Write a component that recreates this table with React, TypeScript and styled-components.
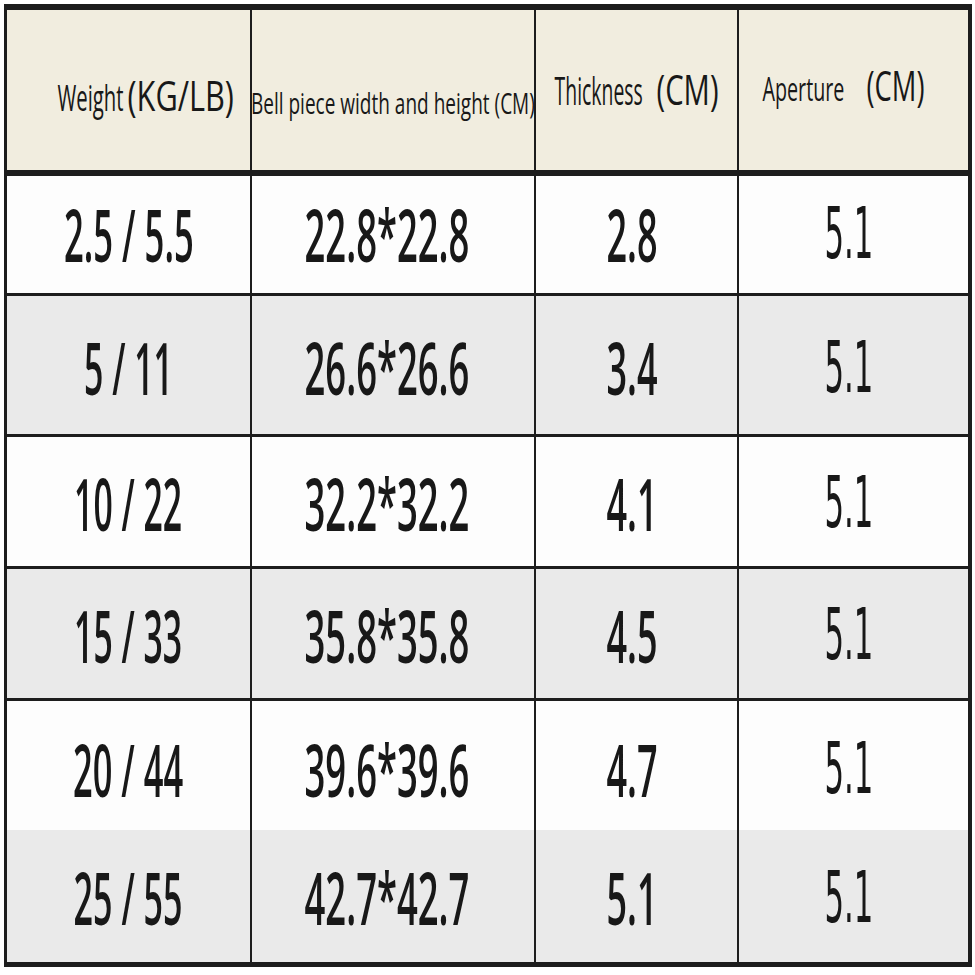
import React, { useLayoutEffect, useRef, useState } from "react";
import styled, { createGlobalStyle } from "styled-components";

const Global = createGlobalStyle`
  html, body { margin: 0; padding: 0; background: #ffffff; }
  body { font-family: "Open Sans", "Liberation Sans", sans-serif; color: #1b1b1b; }
`;

const LINE = "#1d1d1d";
const HEADER_BG = "#f1eddf";
const WHITE = "#fdfdfd";
const GREY = "#eaeaea";

const Page = styled.div`
  padding: 4px 0 0 4px;
`;

const Table = styled.div`
  box-sizing: border-box;
  width: 968px;
  height: 963px;
  border-style: solid;
  border-color: ${LINE};
  border-width: 6px 4px 5px 3px;
  display: grid;
  grid-template-columns: 245px 284px 203px 229px;
  grid-template-rows: 166px 120px 141px 132px 132px 129px 132px;
`;

const Cell = styled.div<{
  $bg: string;
  $bottom: number;
  $last?: boolean;
  $pl?: number;
  $pr?: number;
  $pt?: number;
  $pb?: number;
}>`
  box-sizing: border-box;
  min-width: 0;
  background: ${(p) => p.$bg};
  border-right: ${(p) => (p.$last ? 0 : 2)}px solid ${LINE};
  border-bottom: ${(p) => p.$bottom}px solid ${LINE};
  display: flex;
  align-items: center;
  justify-content: center;
  padding: ${(p) => p.$pt ?? 0}px ${(p) => p.$pr ?? 0}px ${(p) => p.$pb ?? 0}px
    ${(p) => p.$pl ?? 0}px;
`;

const HeaderGroup = styled.div<{ $gap: number }>`
  display: flex;
  align-items: baseline;
  gap: ${(p) => p.$gap}px;
`;

const FitOuter = styled.span<{ $w: number }>`
  display: inline-flex;
  justify-content: center;
  width: ${(p) => p.$w}px;
  flex: 0 0 auto;
`;

const FitInner = styled.span<{ $size: number; $dejavu: boolean; $weight: number }>`
  display: inline-block;
  flex-shrink: 0;
  white-space: pre;
  transform-origin: 50% 50%;
  font-family: ${(p) =>
    p.$dejavu
      ? `"DejaVu Sans Condensed", "DejaVu Sans", sans-serif`
      : `"Open Sans", "Noto Sans", "Liberation Sans", sans-serif`};
  font-size: ${(p) => p.$size}px;
  font-weight: ${(p) => p.$weight};
  line-height: 1.1;
  color: #181818;
`;

type FitProps = {
  w: number;
  size: number;
  dejavu?: boolean;
  weight?: number;
  children: React.ReactNode;
};

function Fit({ w, size, dejavu = false, weight = 400, children }: FitProps) {
  const ref = useRef<HTMLSpanElement>(null);
  const [scale, setScale] = useState(0.5);
  useLayoutEffect(() => {
    const el = ref.current;
    if (!el) return;
    const natural = el.offsetWidth;
    if (natural > 0) setScale(w / natural);
  }, [w, size, children]);
  return (
    <FitOuter $w={w}>
      <FitInner
        ref={ref}
        $size={size}
        $dejavu={dejavu}
        $weight={weight}
        style={{ transform: `scaleX(${scale})` }}
      >
        {children}
      </FitInner>
    </FitOuter>
  );
}

type Row = {
  weight: [string, number];
  size: string;
  thick: string;
  bg: string;
  bottom: number;
  pt: number;
};

const rows: Row[] = [
  { weight: ["2.5 / 5.5", 130], size: "22.8*22.8", thick: "2.8", bg: WHITE, bottom: 3, pt: 0 },
  { weight: ["5 / 11", 89], size: "26.6*26.6", thick: "3.4", bg: GREY, bottom: 3, pt: 6 },
  { weight: ["10 / 22", 108], size: "32.2*32.2", thick: "4.1", bg: WHITE, bottom: 3, pt: 4 },
  { weight: ["15 / 33", 108], size: "35.8*35.8", thick: "4.5", bg: GREY, bottom: 3, pt: 4 },
  { weight: ["20 / 44", 110], size: "39.6*39.6", thick: "4.7", bg: WHITE, bottom: 0, pt: 8 },
  { weight: ["25 / 55", 109], size: "42.7*42.7", thick: "5.1", bg: GREY, bottom: 0, pt: 4 },
];

const NUM_SIZE = 72;
const HEAD_WEIGHT = 500;

export default function App() {
  return (
    <>
      <Global />
      <Page>
        <Table>
          <Cell $bg={HEADER_BG} $bottom={6} $pl={34} $pt={10}>
            <HeaderGroup $gap={5}>
              <Fit w={66} size={36} weight={HEAD_WEIGHT}>Weight</Fit>
              <Fit w={106} size={42} weight={HEAD_WEIGHT}>(KG/LB)</Fit>
            </HeaderGroup>
          </Cell>
          <Cell $bg={HEADER_BG} $bottom={6} $pt={24}>
            <HeaderGroup $gap={0}>
              <Fit w={284} size={30} weight={HEAD_WEIGHT}>Bell piece width and height (CM)</Fit>
            </HeaderGroup>
          </Cell>
          <Cell $bg={HEADER_BG} $bottom={6} $pb={2}>
            <HeaderGroup $gap={13}>
              <Fit w={88} size={39} weight={HEAD_WEIGHT}>Thickness</Fit>
              <Fit w={62} size={42} weight={HEAD_WEIGHT}>(CM)</Fit>
            </HeaderGroup>
          </Cell>
          <Cell $bg={HEADER_BG} $bottom={6} $last $pr={21} $pb={10}>
            <HeaderGroup $gap={22}>
              <Fit w={82} size={32} weight={HEAD_WEIGHT}>Aperture</Fit>
              <Fit w={58} size={42} weight={HEAD_WEIGHT}>(CM)</Fit>
            </HeaderGroup>
          </Cell>

          {rows.map((r, i) => (
            <React.Fragment key={i}>
              <Cell $bg={r.bg} $bottom={r.bottom} $pt={r.pt}>
                <Fit w={r.weight[1]} size={NUM_SIZE} weight={600}>
                  {r.weight[0]}
                </Fit>
              </Cell>
              <Cell $bg={r.bg} $bottom={r.bottom} $pr={13} $pt={r.pt}>
                <Fit w={165} size={NUM_SIZE} weight={600}>
                  {r.size}
                </Fit>
              </Cell>
              <Cell $bg={r.bg} $bottom={r.bottom} $pr={8} $pt={r.pt}>
                <Fit w={51} size={NUM_SIZE} weight={600}>
                  {r.thick}
                </Fit>
              </Cell>
              <Cell $bg={r.bg} $bottom={r.bottom} $pr={10} $pt={r.pt} $last>
                <Fit w={49} size={NUM_SIZE - 1} dejavu>
                  5.1
                </Fit>
              </Cell>
            </React.Fragment>
          ))}
        </Table>
      </Page>
    </>
  );
}
